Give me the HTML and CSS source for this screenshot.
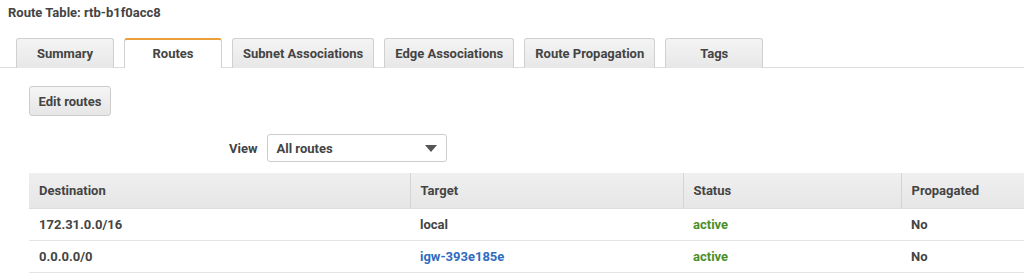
FILE: index.html
```html
<!DOCTYPE html>
<html lang="en">
<head>
  <meta charset="UTF-8">
  <title>Route Table</title>
  <link rel="stylesheet" href="styles.css">
</head>
<body>
  <div class="rt-title">Route Table: rtb-b1f0acc8</div>
  <div class="rt-tabs">
    <div class="rt-tab">Summary</div>
    <div class="rt-tab active">Routes</div>
    <div class="rt-tab">Subnet Associations</div>
    <div class="rt-tab">Edge Associations</div>
    <div class="rt-tab">Route Propagation</div>
    <div class="rt-tab">Tags</div>
  </div>
  <div class="rt-content">
    <button class="btn-edit" type="button">Edit routes</button>
    <div class="rt-view">
      <label for="view-select">View</label>
      <div class="rt-select" id="view-select">
        <span>All routes</span>
        <svg width="12" height="7" viewBox="0 0 12 7"><path d="M0 0h12L6 7z" fill="#555"/></svg>
      </div>
    </div>
    <table class="rt-table">
      <colgroup>
        <col class="c-dest"><col class="c-target"><col class="c-status"><col>
      </colgroup>
      <thead>
        <tr>
          <th>Destination</th>
          <th>Target</th>
          <th>Status</th>
          <th>Propagated</th>
        </tr>
      </thead>
      <tbody>
        <tr>
          <td>172.31.0.0/16</td>
          <td>local</td>
          <td class="st-active">active</td>
          <td>No</td>
        </tr>
        <tr>
          <td>0.0.0.0/0</td>
          <td><a class="rt-link" href="#">igw-393e185e</a></td>
          <td class="st-active">active</td>
          <td>No</td>
        </tr>
      </tbody>
    </table>
  </div>
</body>
</html>
```

FILE: styles.css
```css
body { margin: 0; font-family: Roboto, "Liberation Sans", Arial, sans-serif; font-size: 13px; font-weight: bold; color: #444; background: #fff; }
.rt-title { padding: 4px 8px 0; height: 18px; line-height: 18px; }
.rt-tabs { display: flex; gap: 10px; margin-top: 16px; padding-left: 16px; border-bottom: 1px solid #ddd; height: 29px; }
.rt-tab { box-sizing: border-box; min-width: 98px; height: 30px; padding: 0 10px; text-align: center; line-height: 30px; background: linear-gradient(#f4f4f4, #e7e7e7); border: 1px solid #d0d0d0; border-bottom: none; border-radius: 3px 3px 0 0; }
.rt-tab.active { background: #fff; border-top: 2px solid #eb9f3a; line-height: 28px; }
.rt-content { padding: 18px 0 0 29px; }
.btn-edit { display: block; box-sizing: border-box; width: 82px; height: 30px; padding: 0; font: inherit; color: #444; background: linear-gradient(#f5f5f5, #e6e6e6); border: 1px solid #ccc; border-radius: 3px; }
.rt-view { display: flex; align-items: center; gap: 9px; margin: 18px 0 0 200px; }
.rt-select { box-sizing: border-box; width: 180px; height: 28px; display: flex; align-items: center; justify-content: space-between; padding: 0 9px 0 9px; border: 1px solid #ccc; border-radius: 3px; background: #fff; }
.rt-table { width: calc(100% + 10px); border-collapse: collapse; margin-top: 11px; table-layout: fixed; }
.c-dest { width: 381px; }
.c-target { width: 273px; }
.c-status { width: 218px; }
.rt-table th { height: 35px; padding: 0 10px; text-align: left; background: linear-gradient(#efefef, #e6e6e6); border-bottom: 1px solid #ddd; }
.rt-table th + th { border-left: 1px solid #d4d4d4; }
.rt-table td { height: 31px; padding: 0 10px; border-bottom: 1px solid #e4e4e4; }
.st-active { color: #4a8f2c; }
.rt-link { color: #2f6bbf; text-decoration: none; }
```
